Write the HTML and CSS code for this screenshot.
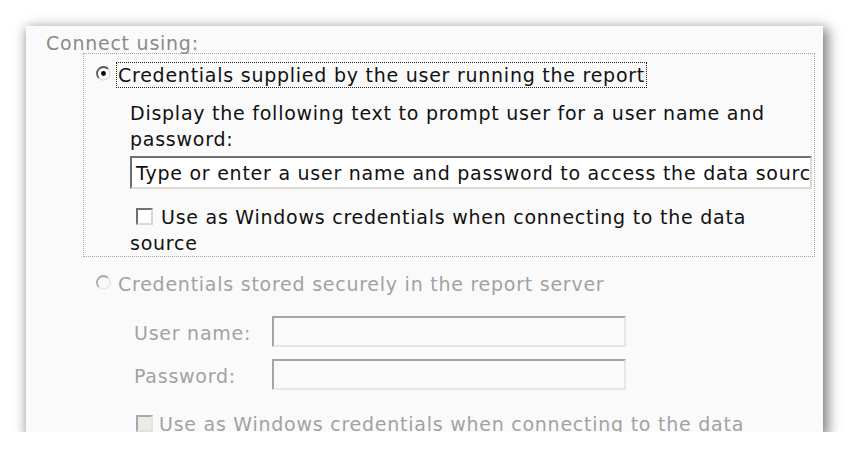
FILE: index.html
```html
<!DOCTYPE html>
<html>
<head>
<meta charset="utf-8">
<link rel="stylesheet" href="styles.css">
</head>
<body>
<div class="panel">
  <div class="legend">Connect using:</div>
  <div class="group">
    <div class="radio-row">
      <svg class="radio" width="15" height="15" viewBox="0 0 15 15">
        <circle cx="7.5" cy="7.5" r="6.5" fill="#fff"/>
        <path d="M2.9 12.1 A6.5 6.5 0 0 1 12.1 2.9" fill="none" stroke="#5a5a5a" stroke-width="1.8"/>
        <path d="M12.1 2.9 A6.5 6.5 0 0 1 2.9 12.1" fill="none" stroke="#dcdcdc" stroke-width="1.4"/>
        <circle cx="7.5" cy="7.5" r="2.4" fill="#000"/>
      </svg>
      <span class="focus-label">Credentials supplied by the user running the report</span>
    </div>
    <div class="indent">
      <p class="prompt">Display the following text to prompt user for a user name and password:</p>
      <div class="textbox">Type or enter a user name and password to access the data source</div>
      <p class="check-line"><span class="check"></span>Use as Windows credentials when connecting to the data source</p>
    </div>
  </div>
  <div class="radio-row disabled second">
    <svg class="radio" width="15" height="15" viewBox="0 0 15 15">
      <circle cx="7.5" cy="7.5" r="6.5" fill="#fafafa"/>
      <path d="M2.9 12.1 A6.5 6.5 0 0 1 12.1 2.9" fill="none" stroke="#a8a8a8" stroke-width="1.8"/>
      <path d="M12.1 2.9 A6.5 6.5 0 0 1 2.9 12.1" fill="none" stroke="#e6e6e6" stroke-width="1.4"/>
    </svg>
    <span class="plain-label">Credentials stored securely in the report server</span>
  </div>
  <div class="fields disabled">
    <div class="field"><span class="field-label">User name:</span><span class="field-box"></span></div>
    <div class="field"><span class="field-label">Password:</span><span class="field-box"></span></div>
    <p class="check-line dis"><span class="check off"></span>Use as Windows credentials when connecting to the data source</p>
  </div>
</div>
</body>
</html>
```
FILE: styles.css
```css
html, body {
  margin: 0;
  padding: 0;
  background: #ffffff;
}
body {
  padding: 26px 0 0 26px;
  font-family: "DejaVu Sans", Verdana, sans-serif;
  font-size: 19px;
  letter-spacing: 0.75px;
  color: #111;
}
.panel {
  width: 797px;
  height: 406px;
  overflow: hidden;
  background: #fafafa;
  box-shadow: 3px 4px 12px 2px rgba(0, 0, 0, 0.5);
}
.legend {
  padding: 4px 0 0 20px;
  height: 23px;
  line-height: 26px;
  color: #8a8a8a;
}
.group {
  margin-left: 57px;
  width: 730px;
  height: 194px;
  border: 1px dotted #a8a8a8;
  padding-top: 8px;
  box-sizing: content-box;
}
.radio-row {
  display: flex;
  align-items: center;
  padding-left: 12px;
  height: 26px;
}
.radio {
  flex: none;
  margin-right: 5px;
  margin-top: -4px;
}
.focus-label {
  border: 1px dotted #222;
  line-height: 24px;
  padding: 0 1px 0 1px;
}
.indent {
  padding-left: 46px;
  padding-right: 2px;
}
.prompt {
  margin: 12px 0 0 0;
  line-height: 26px;
}
.textbox {
  margin-top: 4px;
  height: 29px;
  border-style: solid;
  border-width: 2px 2px 2px 2px;
  border-color: #6f6f6f #dedbd3 #dedbd3 #6f6f6f;
  background: #fff;
  white-space: nowrap;
  overflow: hidden;
  padding-left: 4px;
  line-height: 30px;
}
.check-line {
  margin: 15px 0 0 0;
  line-height: 26px;
}
.check {
  display: inline-block;
  width: 13px;
  height: 13px;
  border-style: solid;
  border-width: 2px;
  border-color: #707070 #d8d8d8 #d8d8d8 #707070;
  background: #fff;
  margin: 0 8px 0 6px;
  vertical-align: -1px;
}
.second {
  margin-top: 14px;
  padding-left: 70px;
}
.disabled {
  color: #a2a2a2;
}
.plain-label {
  line-height: 26px;
  padding-left: 2px;
}
.fields {
  padding-left: 108px;
  width: 680px;
}
.field {
  display: flex;
  align-items: center;
  height: 31px;
  margin-top: 12px;
}
.field:first-child {
  margin-top: 19px;
}
.field-label {
  width: 138px;
  line-height: 26px;
  padding-top: 3px;
}
.field-box {
  width: 350px;
  height: 27px;
  border-style: solid;
  border-width: 2px;
  border-color: #a4a4a4 #e6e6e6 #e6e6e6 #a4a4a4;
  background: #fafafa;
}
.check-line.dis {
  margin-top: 21px;
  padding-left: 2px;
}
.check.off {
  border-color: #a8a8a8 #e2e2e2 #e2e2e2 #a8a8a8;
  background: #ebebe6;
  margin-left: 0;
  margin-right: 6px;
}
```
